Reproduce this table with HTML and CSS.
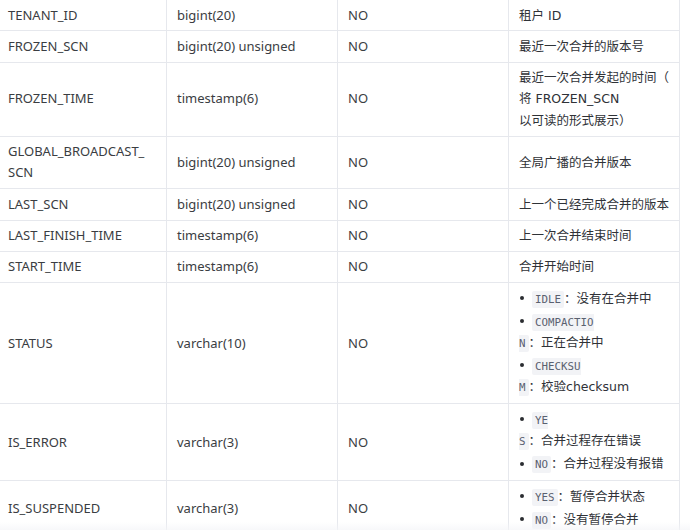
FILE: index.html
```html
<!DOCTYPE html>
<html lang="zh-CN">
<head>
<meta charset="utf-8">
<title>Schema</title>
<link rel="stylesheet" href="styles.css">
</head>
<body>
<div class="viewport">
<table class="schema">
  <colgroup>
    <col class="c1"><col class="c2"><col class="c3"><col class="c4">
  </colgroup>
  <tbody>
    <tr><td>TENANT_ID</td><td>bigint(20)</td><td>NO</td><td class="desc">租户 ID</td></tr>
    <tr><td>FROZEN_SCN</td><td>bigint(20) unsigned</td><td>NO</td><td class="desc">最近一次合并的版本号</td></tr>
    <tr><td>FROZEN_TIME</td><td>timestamp(6)</td><td>NO</td><td class="desc">最近一次合并发起的时间（<br>将 FROZEN_SCN<br>以可读的形式展示）</td></tr>
    <tr><td>GLOBAL_BROADCAST_<br>SCN</td><td>bigint(20) unsigned</td><td>NO</td><td class="desc">全局广播的合并版本</td></tr>
    <tr><td>LAST_SCN</td><td>bigint(20) unsigned</td><td>NO</td><td class="desc">上一个已经完成合并的版本</td></tr>
    <tr><td>LAST_FINISH_TIME</td><td>timestamp(6)</td><td>NO</td><td class="desc">上一次合并结束时间</td></tr>
    <tr><td>START_TIME</td><td>timestamp(6)</td><td>NO</td><td class="desc">合并开始时间</td></tr>
    <tr><td>STATUS</td><td>varchar(10)</td><td>NO</td><td class="desc">
      <ul class="opts">
        <li><code>IDLE</code>：没有在合并中</li>
        <li><code>COMPACTIO<br>N</code>：正在合并中</li>
        <li><code>CHECKSU<br>M</code>：校验checksum</li>
      </ul></td></tr>
    <tr><td>IS_ERROR</td><td>varchar(3)</td><td>NO</td><td class="desc">
      <ul class="opts">
        <li><code>YE<br>S</code>：合并过程存在错误</li>
        <li><code>NO</code>：合并过程没有报错</li>
      </ul></td></tr>
    <tr><td>IS_SUSPENDED</td><td>varchar(3)</td><td>NO</td><td class="desc">
      <ul class="opts">
        <li><code>YES</code>：暂停合并状态</li>
        <li><code>NO</code>：没有暂停合并</li>
      </ul></td></tr>
  </tbody>
</table>
<div class="fade"></div>
</div>
</body>
</html>
```
FILE: styles.css
```css
html, body {
  margin: 0;
  padding: 0;
  background: #ffffff;
}
.viewport {
  position: relative;
  width: 690px;
  height: 530px;
  overflow: hidden;
}
.schema {
  border-collapse: collapse;
  table-layout: fixed;
  width: 682px;
  margin: -1px 0 0 -3px;
  font-family: "Noto Sans", "Noto Sans CJK SC", sans-serif;
  font-size: 13px;
  line-height: 21.33px;
  color: #3a3d42;
}
.c1 { width: 169px; }
.c2, .c3, .c4 { width: 171px; }
.schema td {
  border: 1px solid #e6e8ed;
  padding: 4.5px 9px 4.5px 10px;
  vertical-align: middle;
  text-align: left;
}
.schema td.desc {
  font-family: "DejaVu Sans", "Noto Sans CJK SC", sans-serif;
  font-size: 12.5px;
  color: #2f3237;
}
.opts {
  list-style: none;
  margin: 0;
  padding: 0;
}
.opts li {
  margin: 0 0 1.5px;
  white-space: nowrap;
}
.opts li::before {
  content: "";
  display: inline-block;
  width: 4px;
  height: 4px;
  border-radius: 50%;
  background: #2b2d31;
  vertical-align: middle;
  margin: 0 8px 2px 1px;
}
.opts code {
  font-family: "DejaVu Sans Mono", monospace;
  font-size: 10.8px;
  line-height: 1;
  color: #5a6170;
  background: #f2f3f6;
  border-radius: 2px;
  padding: 2px 3px;
}
.fade {
  position: absolute;
  left: 0;
  right: 0;
  bottom: 0;
  height: 8px;
  background: linear-gradient(rgba(244, 245, 248, 0), rgba(244, 245, 248, 0.7));
}
```
